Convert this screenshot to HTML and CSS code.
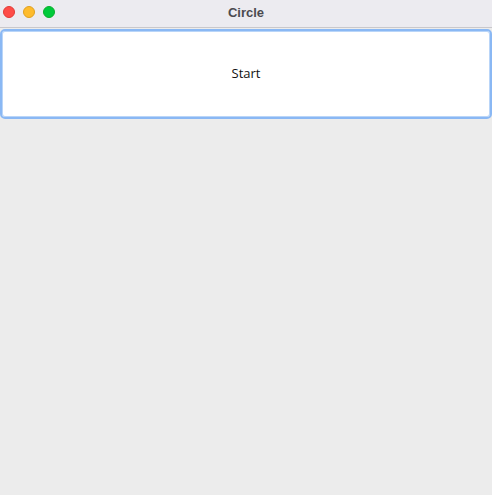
FILE: index.html
```html
<!DOCTYPE html>
<html>
<head>
<meta charset="utf-8">
<link rel="stylesheet" href="styles.css">
</head>
<body>
<div class="window">
  <div class="titlebar">
    <div class="lights">
      <span class="light red"></span>
      <span class="light yellow"></span>
      <span class="light green"></span>
    </div>
    <div class="title">Circle</div>
  </div>
  <div class="content">
    <button class="start">Start</button>
  </div>
</div>
</body>
</html>
```
FILE: styles.css
```css
html, body {
  margin: 0;
  padding: 0;
  width: 492px;
  height: 495px;
  overflow: hidden;
  background: #ececec;
}
.window {
  display: flex;
  flex-direction: column;
  height: 495px;
}
.titlebar {
  position: relative;
  height: 27px;
  background: #ecebf0;
  border-bottom: 1px solid #c9c8cc;
  display: flex;
  align-items: center;
  justify-content: center;
}
.lights {
  position: absolute;
  left: 3px;
  top: 6px;
  display: flex;
  gap: 8px;
}
.light {
  width: 12px;
  height: 12px;
  border-radius: 50%;
  box-sizing: border-box;
}
.red { background: #fe4c48; border: 1px solid #e23a36; }
.yellow { background: #febb2c; border: 1px solid #e0a01f; }
.green { background: #00ca3a; border: 1px solid #0aae2c; }
.title {
  font-family: "Liberation Sans", Arial, sans-serif;
  font-weight: bold;
  font-size: 13px;
  color: #4b4a4f;
  margin-top: -3px;
}
.content {
  flex: 1;
  padding: 1px 0 0 0;
  background: #ececec;
}
.start {
  display: block;
  width: 492px;
  height: 90px;
  margin: 0;
  background: #ffffff;
  border: 2px solid #8ab8f4;
  border-radius: 5px;
  box-shadow: inset 0 0 0 1px #b9d5f8;
  font-family: "Open Sans", "Liberation Sans", sans-serif;
  font-size: 13px;
  color: #111;
  padding: 0 0 2px 0;
}
```
